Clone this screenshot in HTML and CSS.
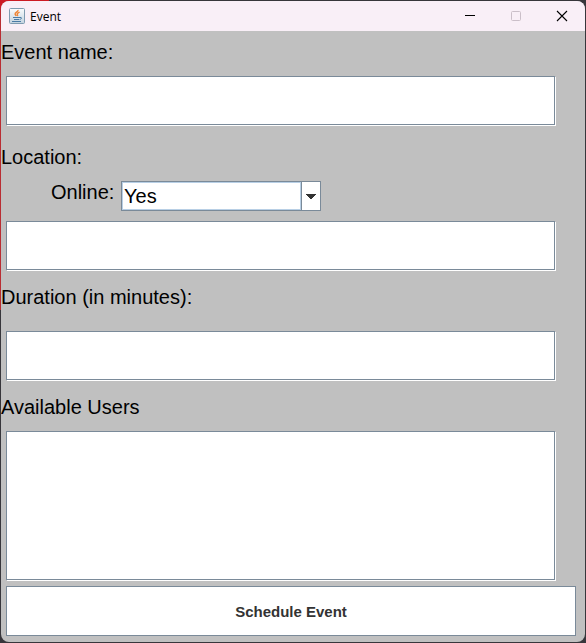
FILE: index.html
```html
<!DOCTYPE html>
<html lang="en">
<head>
<meta charset="utf-8">
<title>Event</title>
<link rel="stylesheet" href="styles.css">
</head>
<body>
<div class="window">
  <header class="titlebar">
    <svg class="app-icon" viewBox="0 0 16 16" aria-hidden="true">
      <defs>
        <linearGradient id="tile" x1="0" y1="0" x2="0" y2="1">
          <stop offset="0" stop-color="#fafcfd"/>
          <stop offset="1" stop-color="#c3d3df"/>
        </linearGradient>
      </defs>
      <rect x=".5" y=".5" width="15" height="15" rx="1" fill="url(#tile)" stroke="#7f9bb0"/>
      <path d="M9 2C9.600 3.800 5.800 4.400 6.100 6c.2 1 .9 1.200 1.200 2M10.600 4.200C8.600 5 7.800 5.800 8.400 6.700c.5.6.3 1-.1 1.400" fill="none" stroke="#ee8434" stroke-width="1.400"/>
      <path d="M4 9.500h7M5 11.500h5M3 13.500h9M11 9.500c2.200-.5 2 1.500-.4 2" fill="none" stroke="#4a7ba5" stroke-width="1"/>
    </svg>
    <h1 class="title">Event</h1>
    <button class="caption-button" type="button" aria-label="Minimize">
      <svg viewBox="0 0 12 12"><path d="M1 5.500h10" stroke="#000"/></svg>
    </button>
    <button class="caption-button" type="button" aria-label="Maximize" disabled>
      <svg viewBox="0 0 12 12"><rect x="1.500" y="1.500" width="9" height="9" rx="1" stroke="#cbbfc9"/></svg>
    </button>
    <button class="caption-button" type="button" aria-label="Close">
      <svg viewBox="0 0 12 12"><path d="M1 1l10 10M11 1L1 11" stroke="#000" stroke-width="1.100"/></svg>
    </button>
  </header>
  <form class="form">
    <label class="label" for="name">Event name:</label>
    <input class="field" id="name" type="text">
    <label class="label label-location" for="location">Location:</label>
    <div class="online">
      <label for="online">Online:</label>
      <div class="combo">
        <select id="online"><option>Yes</option><option>No</option></select>
        <span class="combo-arrow"><svg viewBox="0 0 10 5"><path d="M0 0h10v1H9v1H8v1H7v1H6v1H4V4H3V3H2V2H1V1H0z" fill="#333"/></svg></span>
      </div>
    </div>
    <input class="field" id="location" type="text">
    <label class="label label-duration" for="duration">Duration (in minutes):</label>
    <input class="field" id="duration" type="text">
    <label class="label" for="users">Available Users</label>
    <select class="field users" id="users" size="5"></select>
    <button class="submit" type="button">Schedule Event</button>
  </form>
</div>
</body>
</html>
```
FILE: styles.css
```css
* {
  box-sizing: border-box;
}

body {
  margin: 0;
  padding: 1px;
  min-height: 100vh;
  display: flex;
  background:
    linear-gradient(90deg, #cc1b24 49px, transparent 49px) 0 0 / 100% 8px no-repeat,
    linear-gradient(#b92d33 310px, transparent 310px) 0 0 / 8px 100% no-repeat,
    #37363b;
  font-family: "Liberation Sans", Arial, sans-serif;
  font-size: 20px;
  color: #000;
}

.window {
  flex: 1;
  display: flex;
  flex-direction: column;
  border-radius: 8px;
  overflow: hidden;
  background: #c0c0c0;
}

.titlebar {
  display: flex;
  align-items: center;
  height: 30px;
  padding-left: 8px;
  background: #f9eff7;
}

.app-icon {
  width: 16px;
  height: 16px;
}

.title {
  flex: 1;
  margin: 0 0 0 5px;
  font: 12px "Open Sans", "Segoe UI", sans-serif;
}

.caption-button {
  display: grid;
  place-items: center;
  width: 46px;
  height: 30px;
  padding: 0;
  border: 0;
  background: none;
}

.caption-button svg {
  width: 12px;
  height: 12px;
  fill: none;
}

.form {
  flex: 1;
  display: flex;
  flex-direction: column;
  padding-bottom: 6px;
}

.label {
  height: 50px;
  line-height: 52px;
}

.form > .label:first-child {
  height: 45px;
  line-height: 42px;
}

.label-location {
  height: 55px;
  line-height: 62px;
}

.label-duration {
  height: 60px;
  line-height: 52px;
}

.field {
  height: 49px;
  margin: 0 30px 1px 5px;
  padding: 0 4px;
  border: 1px solid #7a8a99;
  border-radius: 0;
  outline: 0;
  background: #fff;
  box-shadow: 1px 1px #fff;
  font: inherit;
}

.online {
  display: grid;
  grid-template-columns: 60px 200px;
  column-gap: 10px;
  height: 40px;
  padding-left: 50px;
  line-height: 22px;
}

.combo {
  display: flex;
  height: 30px;
  border: 1px solid #7a8a99;
  background: #fff;
}

.combo select {
  flex: 1;
  appearance: none;
  padding: 0 1px;
  border: 1px solid #b8cfe5;
  border-radius: 0;
  outline: 0;
  background: #fff;
  font: inherit;
  color: #000;
}

.combo-arrow {
  display: grid;
  place-items: center;
  width: 19px;
  border-left: 1px solid #7a8a99;
}

.combo-arrow svg {
  width: 10px;
  height: 5px;
}

.users {
  flex: 1;
  min-height: 100px;
}

.submit {
  height: 50px;
  margin: 5px 9px 0 5px;
  border: 1px solid #7a8a99;
  background: #fff;
  font: bold 15px "Liberation Sans", Arial, sans-serif;
  color: #333;
}
```
